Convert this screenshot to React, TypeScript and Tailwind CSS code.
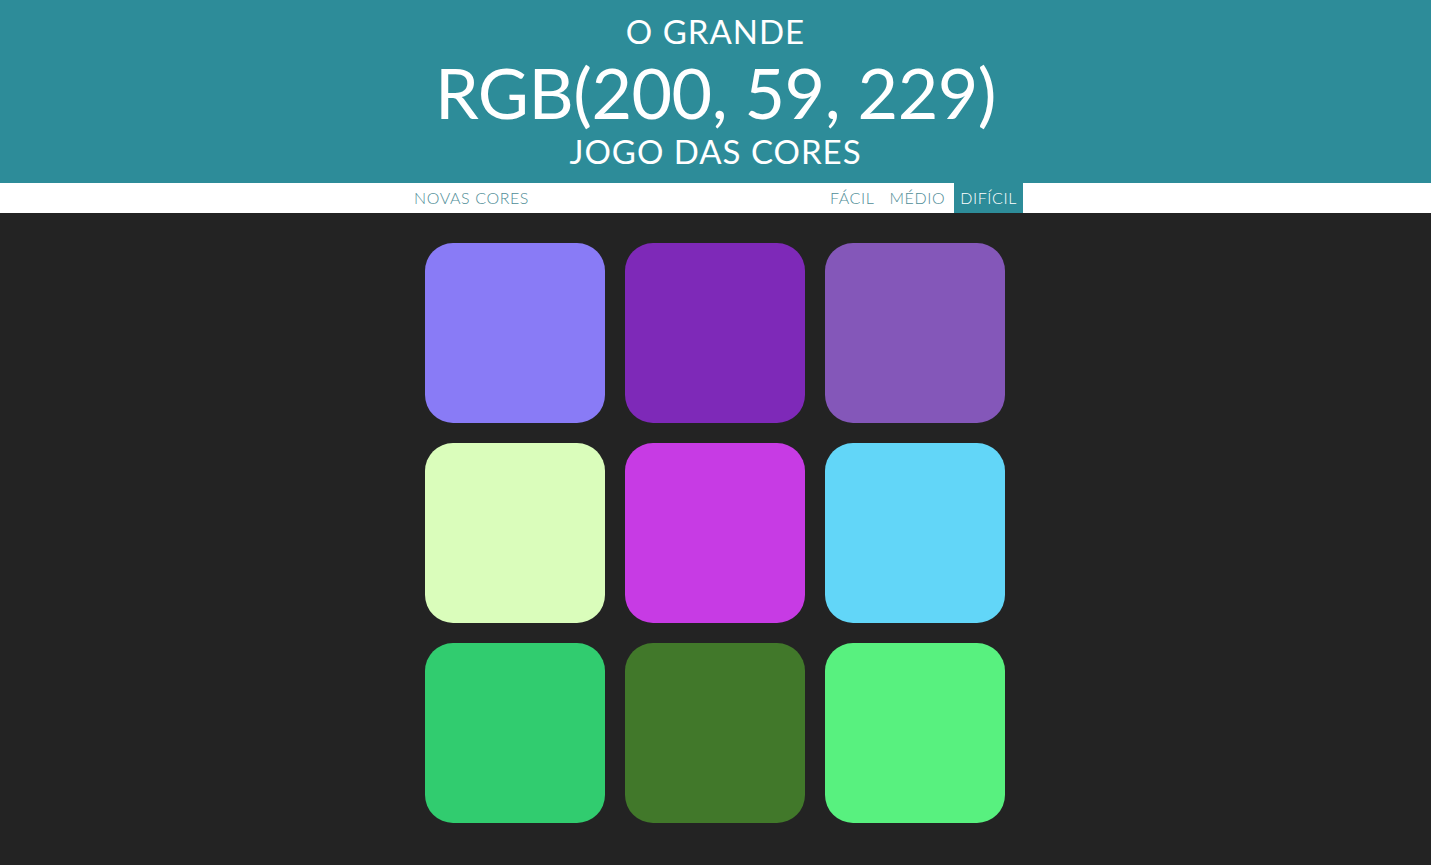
const squares = [
  '#897bf6',
  '#7e29b8',
  '#8457b9',
  '#dafdbb',
  '#c73be4',
  '#62d6f8',
  '#31cc6f',
  '#41782a',
  '#58f17f',
]

export default function App() {
  return (
    <div className="min-h-screen bg-[#232323] font-['Lato',sans-serif]">
      {/* Header */}
      <h1 className="bg-[#2d8c99] text-white text-center font-normal uppercase pt-[10px] pb-[12px]">
        <div className="text-[33px] leading-[42px] tracking-[1px]">O Grande</div>
        <div className="text-[70px] leading-[80px] tracking-[-0.5px]">RGB(200, 59, 229)</div>
        <div className="text-[33px] leading-[39px] tracking-[1px]">Jogo das Cores</div>
      </h1>

      {/* Stripe */}
      <div className="bg-white h-[30px]">
        <div className="w-[615px] mx-auto flex h-full items-stretch text-[16px] tracking-[0.6px] font-light">
          <button className="px-[6px] uppercase text-[#4f8d97] h-full">Novas Cores</button>
          <div className="ml-auto flex">
            <button className="px-[6px] uppercase text-[#4f8d97] h-full">Fácil</button>
            <button className="px-[6px] ml-[3px] uppercase text-[#4f8d97] h-full">Médio</button>
            <button className="px-[6px] ml-[3px] uppercase text-white bg-[#2d8c99] h-full">Difícil</button>
          </div>
        </div>
      </div>

      {/* Squares */}
      <div className="w-[601px] mx-auto mt-[20px] grid grid-cols-[repeat(3,180px)] gap-[20px] px-[10px] pt-[10px]">
        {squares.map((c, i) => (
          <div key={i} className="w-[180px] h-[180px] rounded-[28px]" style={{ background: c }} />
        ))}
      </div>
    </div>
  )
}
